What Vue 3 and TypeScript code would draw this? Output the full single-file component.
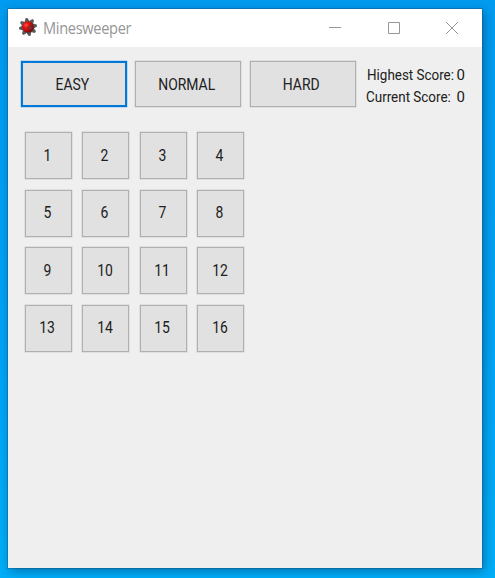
<script setup lang="ts">
import { ref } from 'vue'

type Level = 'EASY' | 'NORMAL' | 'HARD'

const levels: Level[] = ['EASY', 'NORMAL', 'HARD']
const selected = ref<Level>('EASY')
const highest = ref(0)
const current = ref(0)
const spikes = [0, 45, 90, 135, 180, 225, 270, 315]
</script>

<template>
  <div class="desktop">
    <main class="window">
      <header class="titlebar">
        <svg class="mine" viewBox="0 0 20 20" aria-hidden="true">
          <defs>
            <radialGradient id="body" cx="0.34" cy="0.34" r="0.72">
              <stop offset="0" stop-color="#ff5a52" />
              <stop offset="0.3" stop-color="#e81414" />
              <stop offset="0.65" stop-color="#b80c0c" />
              <stop offset="1" stop-color="#571010" />
            </radialGradient>
          </defs>
          <path
            v-for="a in spikes"
            :key="a"
            d="M7 6 L9 1 L11 1 L13 6 Z"
            fill="#5b5858"
            :transform="`rotate(${a - 10} 10 10)`"
          />
          <circle cx="10" cy="10" r="5.8" fill="url(#body)" />
          <path d="M10.5 10 L13 8 L14.5 10 L12.5 12.5 L10.5 12 Z" fill="#5c3030" />
          <path d="M11.5 10.5 L13 11.5" stroke="#a05050" stroke-width="1" />
        </svg>
        <h1 class="title">Minesweeper</h1>
        <div class="controls">
          <svg viewBox="0 0 12 12"><path d="M0 5.5H12" /></svg>
          <svg viewBox="0 0 12 12"><path d="M.5 .5H11.5V11.5H.5Z" /></svg>
          <svg viewBox="0 0 12 12"><path d="M0 0L12 12M12 0L0 12" /></svg>
        </div>
      </header>
      <section class="toolbar">
        <button
          v-for="level in levels"
          :key="level"
          class="level"
          :class="{ active: level === selected }"
          @click="selected = level"
        >
          <span class="caption">{{ level }}</span>
        </button>
        <div class="scores">
          <div class="score"><span class="label">Highest Score:</span><span class="value">{{ highest }}</span></div>
          <div class="score"><span class="label cur">Current Score:</span><span class="value">{{ current }}</span></div>
        </div>
      </section>
      <section class="board">
        <button v-for="n in 16" :key="n" class="cell"><span class="digits">{{ n }}</span></button>
      </section>
    </main>
  </div>
</template>

<style>
body {
  margin: 0;
  overflow: hidden;
}
</style>

<style scoped>
.desktop {
  box-sizing: border-box;
  width: 495px;
  height: 578px;
  padding: 9px 13px 10px 8px;
  background: linear-gradient(180deg, #009bf0 0%, #00a2f4 50%, #00aef8 100%);
  font-family: Roboto, "Liberation Sans", sans-serif;
}
.window {
  width: 474px;
  height: 559px;
  background: #efefef;
  box-shadow: 0 0 0 1px rgba(20, 80, 120, 0.4), 2px 3px 10px rgba(0, 40, 80, 0.45);
}
.titlebar {
  display: flex;
  align-items: center;
  height: 38px;
  padding-left: 10px;
  background: #fff;
}
.mine {
  width: 20px;
  height: 20px;
  margin-top: -2px;
}
.title {
  margin: 0 0 0 5px;
  font: 400 16px/20px "Open Sans", sans-serif;
  white-space: nowrap;
  transform: scaleX(0.912);
  transform-origin: left;
  letter-spacing: -0.35px;
  color: #969696;
}
.controls {
  display: flex;
  gap: 46.5px;
  margin-left: auto;
  padding-right: 24px;
}
.controls svg {
  width: 12px;
  height: 12px;
  fill: none;
  stroke: #969696;
  stroke-width: 1;
}
.toolbar {
  display: flex;
  gap: 8.5px;
  height: 60px;
  padding: 14px 0 0 12.5px;
  box-sizing: border-box;
}
button {
  display: flex;
  align-items: center;
  justify-content: center;
  box-sizing: border-box;
  padding: 0;
  border: 1px solid #b0b0b0;
  outline: 0;
  background: #e1e1e1;
  box-shadow: 0 0 0 0.5px #cfcfcf;
  color: #202020;
  font: 400 16px/20px Roboto, "Liberation Sans", sans-serif;
}
.level {
  width: 106px;
  height: 46px;
}
.level.active {
  border: 2px solid #0078d7;
  box-shadow: 0 0 0 0.5px #8fc0e8;
}
.caption {
  transform: translate(-1px, 0.5px) scaleX(0.87);
}
.scores {
  padding: 2.5px 0 0 2.5px;
  color: #202020;
}
.score {
  display: flex;
  width: 99px;
  height: 22.5px;
  font-size: 15px;
  line-height: 22px;
}
.label {
  flex: 0 0 90px;
  min-width: 0;
  white-space: nowrap;
  transform-origin: left;
  transform: scaleX(0.895);
}
.cur {
  transform: translateX(-1px) scaleX(0.895);
}
.board {
  display: grid;
  grid-template-columns: repeat(4, 47px);
  grid-auto-rows: 47px;
  gap: 10.5px;
  padding: 25px 0 0 16.5px;
}
.digits {
  transform: translateX(-1px) scaleX(0.87);
}
</style>
